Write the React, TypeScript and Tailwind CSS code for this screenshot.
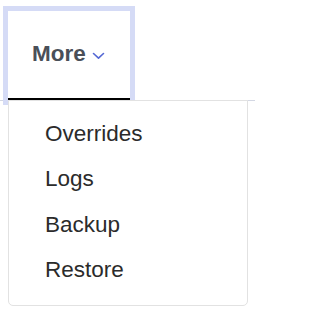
import React from "react";

export default function App() {
  const items = ["Overrides", "Logs", "Backup", "Restore"];
  return (
    <div
      className="relative w-[255px] h-[312px] bg-white overflow-hidden"
      style={{ fontFamily: '"Liberation Sans", Arial, sans-serif' }}
    >
      <div className="flex pl-[8px] pt-[11px] border-b border-[#d3d7e3]">
        <button className="flex items-center h-[89px] w-[122px] pl-[24px] border-b-2 border-black outline outline-[5px] outline-[#d5dbf6] bg-white">
          <span className="text-[22.5px] font-bold text-[#4a4f58] leading-none">More</span>
          <svg
            className="ml-[6px] mt-[3px]"
            width="13"
            height="8"
            viewBox="0 0 13 8"
            fill="none"
          >
            <path d="M1.5 1.5 L6.5 6.2 L11.5 1.5" stroke="#5468d4" strokeWidth="1.6" strokeLinecap="round" strokeLinejoin="round" />
          </svg>
        </button>
      </div>
      <div className="absolute left-[8px] top-[100px] w-[240px] h-[206px] bg-white border border-[#e2e2e2] rounded-b-[5px] pt-[10px] pb-[13px] pl-[36px] z-10">
        {items.map((t) => (
          <div key={t} className="h-[45.5px] flex items-center text-[22.5px] text-[#2b2b2b]">
            {t}
          </div>
        ))}
      </div>
    </div>
  );
}
